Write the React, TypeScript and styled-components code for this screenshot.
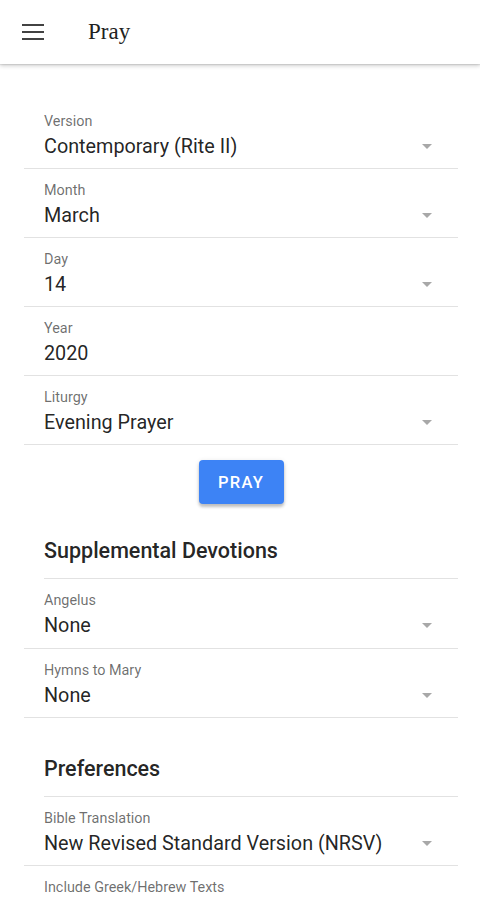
import React from 'react';
import styled, { createGlobalStyle } from 'styled-components';

const GlobalStyle = createGlobalStyle`
    html, body {
        margin: 0;
        padding: 0;
        background: #ffffff;
    }
    body {
        font-family: Roboto, "Liberation Sans", sans-serif;
        color: rgba(0, 0, 0, 0.87);
    }
`;

const StyledPage = styled.div`
    width: 480px;
    min-height: 900px;
    background: #ffffff;
`;

const StyledHeader = styled.header`
    display: flex;
    align-items: center;
    height: 64px;
    padding: 0 0 0 22px;
    box-sizing: border-box;
    background: #ffffff;
    box-shadow: 0 2px 4px rgba(0, 0, 0, 0.18), 0 1px 1px rgba(0, 0, 0, 0.08);
`;

const StyledMenuButton = styled.button`
    display: flex;
    align-items: center;
    justify-content: center;
    width: 22px;
    height: 22px;
    padding: 0;
    margin: 0 44px 0 0;
    border: none;
    background: none;
    color: #424242;
`;

const StyledTitle = styled.h1`
    margin: 0;
    font-family: "Liberation Serif", "DejaVu Serif", serif;
    font-size: 23px;
    font-weight: 400;
    color: #212121;
`;

const StyledContent = styled.main`
    display: flex;
    flex-direction: column;
    padding: 36px 22px 0 24px;
`;

const StyledField = styled.div`
    position: relative;
    display: flex;
    flex-direction: column;
    height: 69.1px;
    padding: 14px 20px 0;
    box-sizing: border-box;
    border-bottom: 1px solid #e2e2e2;
`;

const StyledLabel = styled.span`
    font-size: 14.4px;
    line-height: 16px;
    color: rgba(0, 0, 0, 0.58);
    white-space: nowrap;
`;

const StyledValue = styled.span`
    margin-top: 5px;
    font-size: 19.8px;
    line-height: 24px;
    color: rgba(0, 0, 0, 0.87);
    white-space: nowrap;
`;

const StyledArrow = styled.span`
    position: absolute;
    right: 26px;
    top: 44px;
    width: 0;
    height: 0;
    border-left: 5px solid transparent;
    border-right: 5px solid transparent;
    border-top: 5px solid #a8a8a8;
`;

const StyledButtonRow = styled.div`
    display: flex;
    justify-content: center;
    padding: 15px 0 0;
`;

const StyledButton = styled.button`
    width: 85px;
    height: 44px;
    border: none;
    border-radius: 4px;
    background: #3d83f5;
    color: #ffffff;
    font-family: Roboto, "Liberation Sans", sans-serif;
    font-size: 16.5px;
    font-weight: 500;
    letter-spacing: 1.2px;
    box-shadow: 0 3px 3px rgba(0, 0, 0, 0.2), 0 1px 5px rgba(0, 0, 0, 0.12);
`;

const StyledSectionTitle = styled.h2<{ $top: number }>`
    margin: ${(p) => p.$top}px 0 0 20px;
    padding: 0 0 13px;
    border-bottom: 1px solid #e2e2e2;
    font-size: 21.5px;
    line-height: 28px;
    font-weight: 500;
    color: rgba(0, 0, 0, 0.87);
    white-space: nowrap;
`;

const MenuIcon = () => (
    <svg width="22" height="16" viewBox="0 0 22 16">
        <rect x="0" y="0" width="22" height="2" fill="currentColor" />
        <rect x="0" y="7" width="22" height="2" fill="currentColor" />
        <rect x="0" y="14" width="22" height="2" fill="currentColor" />
    </svg>
);

type FieldProps = { label: string; value?: string; select?: boolean };

const Field = ({ label, value, select = true }: FieldProps) => (
    <StyledField>
        <StyledLabel>{label}</StyledLabel>
        {value && <StyledValue>{value}</StyledValue>}
        {select && value && <StyledArrow />}
    </StyledField>
);

export default function App() {
    return (
        <StyledPage>
            <GlobalStyle />
            <StyledHeader>
                <StyledMenuButton aria-label="menu">
                    <MenuIcon />
                </StyledMenuButton>
                <StyledTitle>Pray</StyledTitle>
            </StyledHeader>
            <StyledContent>
                <Field label="Version" value="Contemporary (Rite II)" />
                <Field label="Month" value="March" />
                <Field label="Day" value="14" />
                <Field label="Year" value="2020" select={false} />
                <Field label="Liturgy" value="Evening Prayer" />
                <StyledButtonRow>
                    <StyledButton>PRAY</StyledButton>
                </StyledButtonRow>

                <StyledSectionTitle $top={33}>Supplemental Devotions</StyledSectionTitle>
                <Field label="Angelus" value="None" />
                <Field label="Hymns to Mary" value="None" />

                <StyledSectionTitle $top={37}>Preferences</StyledSectionTitle>
                <Field label="Bible Translation" value="New Revised Standard Version (NRSV)" />
                <Field label="Include Greek/Hebrew Texts" />
            </StyledContent>
        </StyledPage>
    );
}
